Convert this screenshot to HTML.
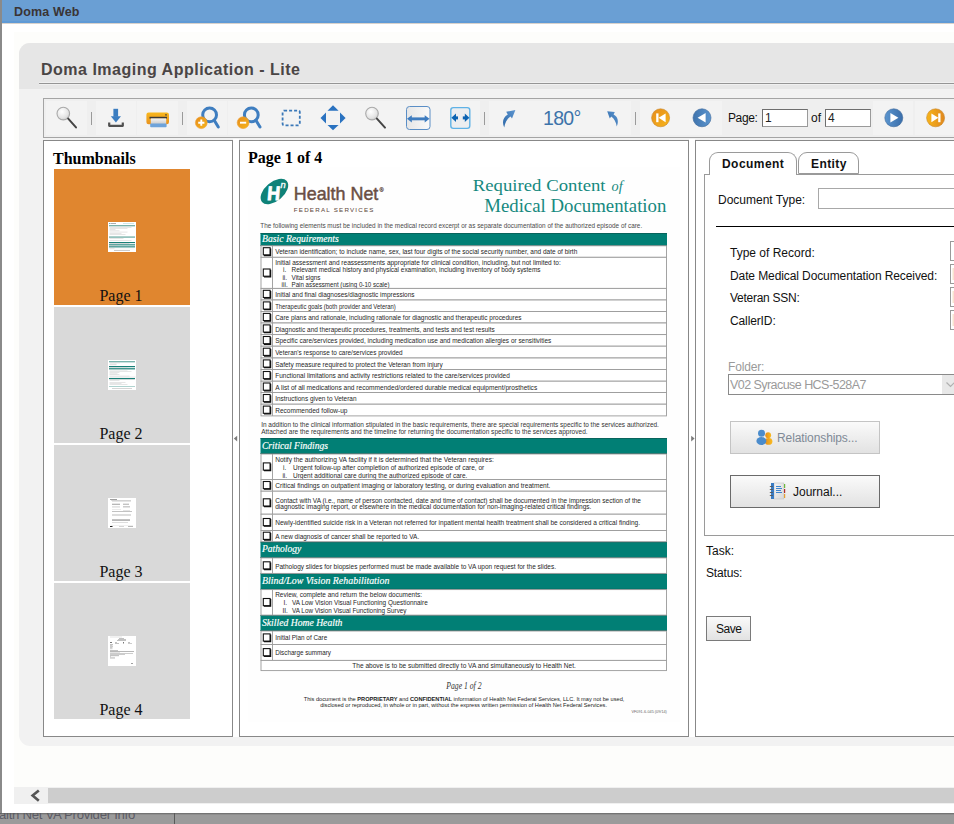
<!DOCTYPE html>
<html><head><meta charset="utf-8">
<style>
*{margin:0;padding:0;box-sizing:border-box}
html,body{width:954px;height:824px;overflow:hidden;background:#fff;font-family:"Liberation Sans",sans-serif;position:relative}
.a{position:absolute}
#under{left:0;top:813px;width:954px;height:11px;background:#9b9b9b;overflow:hidden}
#under .t{left:-1px;top:-6px;font-size:13.2px;color:#5c5c66;white-space:nowrap;letter-spacing:-0.3px}
#under .sh{left:0;top:0;width:954px;height:2px;background:linear-gradient(rgba(90,90,90,0.8),rgba(155,155,155,0))}
#under .v{left:174px;top:0;width:1px;height:11px;background:#5a5a5a}
#lb{left:0;top:0;width:2px;height:813px;background:#8a8a8a}
#title{left:2px;top:0;width:952px;height:24px;background:#6a9fd4;border-bottom:1px solid #d8d2cc;box-shadow:inset 0 -2px 0 #5f9ad6}
#title span{position:absolute;left:12px;top:5px;font-weight:bold;font-size:12.5px;color:#3a3434;letter-spacing:0.15px}
#offw{left:14px;top:32px;width:940px;height:755px;background:#fdfdfb}
#main{left:19px;top:43px;width:960px;height:703px;background:#f2f2f2;border-radius:11px;overflow:hidden}
#mainhead{left:0;top:0;width:960px;height:46px;background:#e6e6e6}
#apptitle{left:22px;top:18px;font-weight:bold;font-size:16px;color:#4a4545;letter-spacing:0.5px;white-space:nowrap}
#uline{left:20px;top:39px;width:940px;height:3px;background:#959595;border-top:1px solid #f0f0f0;border-bottom:1px solid #f0f0f0}
#toolbar{left:43px;top:98px;width:920px;height:40px;border:1px solid #a4a4a4;background:#efefef}
#thumbs{left:43px;top:140px;width:190px;height:597px;border:1px solid #888;background:#fff}
#pagev{left:239px;top:140px;width:450px;height:597px;border:1px solid #888;background:#fff;overflow:hidden}
#right{left:695px;top:140px;width:270px;height:597px;border:1px solid #888;background:#fff}
#split1{left:233px;top:139px;width:6px;height:598px;background:#fff}
#split2{left:689px;top:139px;width:6px;height:598px;background:#fff}
.inp{border:1px solid #6e6e6e;border-right-color:#9a9a9a;border-bottom-color:#9a9a9a;background:#fff;font-size:12px;color:#222;padding:1px 0 0 2px;line-height:15px}

.ser{font-family:"Liberation Serif",serif}
.thb{position:absolute;left:10px;width:136px;height:136px;background:#d9d9d9}
.thb.sel{background:#e0862f}
.thb .lbl{position:absolute;left:-1px;width:136px;top:118px;text-align:center;font-size:16px;color:#111;font-family:"Liberation Serif",serif}
.thb .mini{position:absolute;left:54px;top:53px;width:28px;height:30px;background:#fff}
.thb .mini svg{display:block}
.lab{position:absolute;font-size:12px;color:#111;white-space:nowrap}

.tab{border:1px solid #9a9a9a;border-bottom:none;border-radius:9px 9px 0 0;background:#fff}
.tab b{position:absolute;top:3px;font-size:12px;color:#111;letter-spacing:0.3px}
.rin{left:950px;width:20px;height:20px;border:1px solid #9a9a9a;background:#fff}
.btn2{border:1px solid #888;background:linear-gradient(#fafafa,#e2e2e2)}
#scroll{left:14px;top:787px;width:940px;height:17px;background:#f0f0f0}
#scroll .thm{left:34px;top:1px;width:920px;height:15px;background:#cdcdcd}
#scroll .btn{left:0;top:0;width:34px;height:17px;background:#f0f0f0}
</style></head><body>
<div id="under" class="a"><div class="a t">alth Net VA Provider Info</div><div class="a v"></div><div class="a sh"></div></div>
<div id="lb" class="a"></div>
<div id="title" class="a"><span>Doma Web</span></div>
<div id="offw" class="a"></div>
<div id="main" class="a">
  <div id="mainhead" class="a"></div>
  <div id="apptitle" class="a">Doma Imaging Application - Lite</div>
  <div id="uline" class="a"></div>
</div>
<div id="toolbar" class="a"></div>
<svg class="a" style="left:0;top:0" width="954" height="824" viewBox="0 0 954 824">
<defs>
<radialGradient id="glass" cx="0.4" cy="0.35" r="0.7"><stop offset="0" stop-color="#ffffff"/><stop offset="0.7" stop-color="#e4e4e4"/><stop offset="1" stop-color="#c8c8c8"/></radialGradient>
<linearGradient id="org" x1="0" y1="0" x2="1" y2="1"><stop offset="0" stop-color="#e58c1e"/><stop offset="1" stop-color="#f7b51a"/></linearGradient>
<linearGradient id="org2" x1="0" y1="0" x2="1" y2="0"><stop offset="0" stop-color="#f7b51a"/><stop offset="1" stop-color="#e0871e"/></linearGradient>
<linearGradient id="blu" x1="0" y1="0" x2="1" y2="0"><stop offset="0" stop-color="#3f73ac"/><stop offset="1" stop-color="#5b95cf"/></linearGradient>
<linearGradient id="blu2" x1="0" y1="0" x2="1" y2="0"><stop offset="0" stop-color="#5b95cf"/><stop offset="1" stop-color="#3a6eaa"/></linearGradient>
<linearGradient id="prn" x1="0" y1="0" x2="0" y2="1"><stop offset="0" stop-color="#f8b71c"/><stop offset="1" stop-color="#e89220"/></linearGradient>
<linearGradient id="paper" x1="0" y1="0" x2="0" y2="1"><stop offset="0" stop-color="#f4f4f4"/><stop offset="1" stop-color="#c9c9c9"/></linearGradient>
<linearGradient id="fitg" x1="0" y1="0" x2="1" y2="0"><stop offset="0" stop-color="#e6e6e6"/><stop offset="1" stop-color="#fafafa"/></linearGradient>
<linearGradient id="rot" x1="0" y1="1" x2="1" y2="0"><stop offset="0" stop-color="#2d68a8"/><stop offset="1" stop-color="#5d95cf"/></linearGradient>
</defs>
<!-- button faint rects -->
<g fill="#f3f3f3"><rect x="46" y="101" width="41" height="34"/><rect x="96" y="101" width="40" height="34"/><rect x="137" y="101" width="41" height="34"/><rect x="187" y="101" width="40" height="34"/><rect x="228" y="101" width="42" height="34"/><rect x="270" y="101" width="41" height="34"/><rect x="311" y="101" width="42" height="34"/><rect x="353" y="101" width="43" height="34"/><rect x="396" y="101" width="42" height="34"/><rect x="438" y="101" width="42" height="34"/><rect x="489" y="101" width="41" height="34"/><rect x="530" y="101" width="62" height="34"/><rect x="592" y="101" width="39" height="34"/><rect x="640" y="101" width="41" height="34"/><rect x="681" y="101" width="41" height="34"/><rect x="873" y="101" width="40" height="34"/><rect x="915" y="101" width="45" height="34"/></g>
<!-- separators -->
<g fill="#9a9a9a"><rect x="91" y="112" width="1" height="13"/><rect x="182" y="112" width="1" height="13"/><rect x="484" y="112" width="1" height="13"/><rect x="635" y="112" width="1" height="13"/></g>
<!-- magnifier 1 -->
<g><circle cx="63.3" cy="113.6" r="6.3" fill="url(#glass)" stroke="#a9a9a9" stroke-width="1.1"/><line x1="68.2" y1="118.6" x2="76" y2="127.4" stroke="#444" stroke-width="2" stroke-linecap="round"/></g>
<!-- download -->
<g><rect x="113.4" y="108.8" width="4.7" height="8" fill="#3b7dc0"/><polygon points="110.8,116.3 121,116.3 115.9,122.4" fill="#3b7dc0"/>
<path d="M109.2,122.5 V125.8 H122.8 V122.5" fill="none" stroke="#505050" stroke-width="2.2" stroke-linejoin="round"/></g>
<!-- printer -->
<g><rect x="146.4" y="112.5" width="22.6" height="11.8" rx="2.2" fill="url(#prn)"/><rect x="149.5" y="116.8" width="17.5" height="1.8" fill="#3a3a3a"/><circle cx="166" cy="114.8" r="0.9" fill="#5a4a30"/>
<rect x="150.8" y="118.4" width="15.4" height="5.8" fill="url(#paper)"/><rect x="150.2" y="123.6" width="16.4" height="3.6" rx="0.8" fill="#6ea3da"/></g>
<!-- zoom in -->
<g><circle cx="209.6" cy="114.9" r="6.9" fill="none" stroke="#3f7ec0" stroke-width="3"/><line x1="214.2" y1="120.2" x2="218.3" y2="127" stroke="#3f7ec0" stroke-width="3" stroke-linecap="round"/>
<circle cx="201.3" cy="122.7" r="5.9" fill="url(#org)" stroke="#f0a030" stroke-width="0.6"/><path d="M198.2,122.7 H204.4 M201.3,119.6 V125.8" stroke="#fff" stroke-width="1.9"/></g>
<!-- zoom out -->
<g><circle cx="251.3" cy="114.9" r="6.9" fill="none" stroke="#3f7ec0" stroke-width="3"/><line x1="255.9" y1="120.2" x2="260" y2="127" stroke="#3f7ec0" stroke-width="3" stroke-linecap="round"/>
<circle cx="243.1" cy="122.7" r="5.9" fill="url(#org)" stroke="#f0a030" stroke-width="0.6"/><path d="M240,122.7 H246.2" stroke="#fff" stroke-width="1.9"/></g>
<!-- select rect -->
<rect x="282.6" y="110.6" width="17.2" height="14.8" rx="1.5" fill="none" stroke="#3a78b8" stroke-width="1.8" stroke-dasharray="3 2"/>
<!-- pan -->
<g fill="#2a72c0"><polygon points="327.5,110.8 338.6,110.8 333,105.3"/><polygon points="327.5,124.9 338.6,124.9 333,130.2"/><polygon points="326,112.6 326,123.5 320.5,118"/><polygon points="340,112.6 340,123.5 345.6,118"/></g>
<!-- magnifier 2 -->
<g><circle cx="372" cy="113.6" r="6.3" fill="url(#glass)" stroke="#a9a9a9" stroke-width="1.1"/><line x1="376.9" y1="118.6" x2="385" y2="127.6" stroke="#444" stroke-width="2" stroke-linecap="round"/></g>
<!-- fit width -->
<g><rect x="406.5" y="106.5" width="23.5" height="23" rx="3" fill="url(#fitg)" stroke="#5a8ec6" stroke-width="1"/>
<rect x="410" y="117.4" width="16.5" height="2.9" fill="#3e7cbf"/><polygon points="407,118.85 411.8,115.2 411.8,122.5" fill="#3e7cbf"/><polygon points="429.5,118.85 424.7,115.2 424.7,122.5" fill="#3e7cbf"/></g>
<!-- fit page -->
<g><rect x="450.8" y="107.6" width="19" height="20.8" rx="2.6" fill="#eceef0" stroke="#5fb2e6" stroke-width="1.4"/>
<polygon points="451.4,117.8 456,113.6 456,122" fill="#0b63b2"/><rect x="455" y="116.4" width="3" height="3" fill="#0b63b2"/>
<polygon points="469.4,117.8 464.8,113.6 464.8,122" fill="#0b63b2"/><rect x="462.8" y="116.4" width="3" height="3" fill="#0b63b2"/></g>
<!-- rotate right -->
<path d="M504.2,127.6 C501.8,122 503,117.2 507.8,114.4 L506.2,111.8 L515.4,110 L512,118.6 L510.6,116.4 C507.2,118.8 505,122.6 504.2,127.6 Z" fill="url(#rot)"/>
<!-- rotate left -->
<path d="M616.8,126.6 C619,121.2 617.8,116.8 613.6,114.6 L614.8,112 L607.2,111.2 L609.8,118.4 L611.2,116.4 C614.2,118.6 616.2,122 616.8,126.6 Z" fill="url(#rot)"/>
<!-- nav -->
<g><circle cx="660.6" cy="117.8" r="9" fill="url(#org)" stroke="#c8862a" stroke-width="0.6"/><rect x="656.2" y="113.4" width="2.3" height="8.8" fill="#fff"/><polygon points="665.6,113.4 665.6,122.2 658.6,117.8" fill="#fff"/></g>
<g><circle cx="702" cy="117.8" r="9" fill="url(#blu)" stroke="#3a6699" stroke-width="0.6"/><polygon points="705.6,113 705.6,122.6 697.6,117.8" fill="#fff"/></g>
<g><circle cx="893.8" cy="117.8" r="9" fill="url(#blu2)" stroke="#3a6699" stroke-width="0.6"/><polygon points="890.4,113 890.4,122.6 898.4,117.8" fill="#fff"/></g>
<g><circle cx="935.6" cy="117.8" r="9" fill="url(#org2)" stroke="#c8862a" stroke-width="0.6"/><polygon points="931.4,113.4 931.4,122.2 938.4,117.8" fill="#fff"/><rect x="938.2" y="113.4" width="2.3" height="8.8" fill="#fff"/></g>
</svg>
<div class="a" style="left:543px;top:107px;font-size:19.5px;color:#3d73aa;letter-spacing:-0.7px">180°</div>
<div class="a" style="left:728px;top:111px;font-size:12px;color:#111;letter-spacing:-0.4px">Page:</div>
<div class="a inp" style="left:762px;top:109px;width:46px;height:18px">1</div>
<div class="a" style="left:811px;top:111px;font-size:12px;color:#111">of</div>
<div class="a inp" style="left:825px;top:109px;width:46px;height:18px">4</div>

<div id="split1" class="a"></div>
<div id="split2" class="a"></div>
<svg class="a" style="left:0;top:0" width="954" height="824" viewBox="0 0 954 824"><polygon points="237.2,435.8 237.2,441.4 233.8,438.6" fill="#7a7a7a"/><polygon points="691.2,435.8 691.2,441.4 694.6,438.6" fill="#7a7a7a"/></svg>
<div id="thumbs" class="a">
<div class="a ser" style="left:9px;top:9px;font-weight:bold;font-size:16px;color:#000">Thumbnails</div>
<div class="thb sel" style="top:28px"><div class="mini m1"><svg width="28" height="30" viewBox="0 0 28 30"><rect width="28" height="30" fill="#fff"/>
<rect x="1" y="1" width="1.5" height="1" fill="#7ab"/><rect x="3" y="1.2" width="5" height="0.8" fill="#999"/><rect x="15" y="1" width="11" height="0.7" fill="#bdd"/>
<rect x="1" y="3.2" width="26" height="1.1" fill="#5a9e96"/>
<g fill="#ccc"><rect x="1.5" y="5" width="22" height="0.5"/><rect x="1.5" y="6.2" width="18" height="0.5"/><rect x="1.5" y="7.4" width="6" height="0.5"/><rect x="1.5" y="8.6" width="10" height="0.5"/><rect x="1.5" y="9.8" width="18" height="0.5"/><rect x="1.5" y="11" width="12" height="0.5"/><rect x="1.5" y="12.2" width="16" height="0.5"/></g>
<rect x="1" y="14.3" width="26" height="1.6" fill="#8bbcb6"/>
<g fill="#ccc"><rect x="1.5" y="16.5" width="14" height="0.5"/><rect x="1.5" y="18.3" width="22" height="0.5"/></g>
<rect x="1" y="20" width="26" height="1.1" fill="#1a8078"/><rect x="1.5" y="21.5" width="20" height="0.5" fill="#bbb"/>
<rect x="1" y="22.3" width="26" height="1.1" fill="#1a8078"/><rect x="1.5" y="23.6" width="8" height="0.5" fill="#bbb"/>
<rect x="1" y="24.3" width="26" height="1.1" fill="#1a8078"/><rect x="1.5" y="25.8" width="5" height="0.5" fill="#bbb"/><rect x="1.5" y="26.8" width="25" height="0.4" fill="#ddd"/>
<rect x="6" y="28" width="16" height="0.6" fill="#aaa"/></svg></div><div class="lbl">Page 1</div></div>
<div class="thb" style="top:166px"><div class="mini m2"><svg width="28" height="30" viewBox="0 0 28 30"><rect width="28" height="30" fill="#fff"/>
<rect x="1" y="1.2" width="26" height="1.1" fill="#5aa39b"/>
<g fill="#ccc"><rect x="2" y="2.7" width="10" height="0.5"/><rect x="1.5" y="3.8" width="7" height="0.5"/><rect x="1.5" y="4.6" width="7" height="0.5"/></g>
<rect x="1" y="6" width="26" height="1.2" fill="#1a8078"/><rect x="1.5" y="7.5" width="18" height="0.4" fill="#ccc"/>
<rect x="1" y="8.2" width="26" height="1.2" fill="#1a8078"/>
<g fill="#ccc"><rect x="1.5" y="9.8" width="18" height="0.5"/><rect x="1.5" y="11.5" width="22" height="0.5"/><rect x="1.5" y="12.4" width="10" height="0.5"/><rect x="1.5" y="13.6" width="8" height="0.5"/><rect x="1.5" y="14.5" width="10" height="0.5"/><rect x="1.5" y="15.8" width="20" height="0.5"/><rect x="1.5" y="16.8" width="26" height="0.5"/></g>
<rect x="1" y="18" width="26" height="1.2" fill="#1a8078"/>
<g fill="#ccc"><rect x="1.5" y="19.5" width="25" height="0.5"/><rect x="1.5" y="20.5" width="10" height="0.5"/><rect x="1.5" y="22" width="16" height="0.5"/><rect x="1.5" y="23" width="12" height="0.5"/><rect x="1.5" y="24.5" width="18" height="0.5"/></g>
<rect x="1" y="26" width="26" height="0.8" fill="#9cc9c3"/>
<rect x="4" y="28.2" width="20" height="0.5" fill="#aaa"/></svg></div><div class="lbl">Page 2</div></div>
<div class="thb" style="top:304px"><div class="mini m3"><svg width="28" height="30" viewBox="0 0 28 30"><rect width="28" height="30" fill="#fff"/>
<g fill="#888"><rect x="2" y="1" width="7" height="0.8"/><rect x="3" y="2" width="20" height="0.5" fill="#bbb"/><rect x="4" y="2.8" width="19" height="0.5" fill="#aaa"/>
<rect x="4" y="5.8" width="8" height="0.8"/><rect x="15" y="5.8" width="6" height="0.7"/>
<rect x="4" y="8" width="8" height="0.4" fill="#bbb"/><rect x="15" y="8" width="7" height="0.5" fill="#999"/><rect x="4" y="9.5" width="8" height="0.4" fill="#ccc"/><rect x="15" y="9.5" width="7" height="0.4" fill="#bbb"/><rect x="4" y="11" width="9" height="0.4" fill="#ccc"/><rect x="15" y="12" width="7" height="0.4" fill="#bbb"/>
<rect x="4" y="13" width="20" height="0.6" fill="#999"/>
<rect x="4" y="16" width="19" height="0.5" fill="#bbb"/><rect x="4" y="17.2" width="19" height="0.5" fill="#bbb"/>
<rect x="4" y="21" width="18" height="0.6" fill="#999"/><rect x="4" y="22" width="18" height="0.6" fill="#888"/><rect x="4" y="24.2" width="16" height="0.5" fill="#bbb"/>
<rect x="3" y="27" width="22" height="0.3" fill="#ccc"/><rect x="2" y="28" width="2.5" height="1" fill="#222"/><rect x="11" y="28" width="5" height="0.5" fill="#aaa"/><rect x="20" y="28" width="5" height="0.6" fill="#888"/></g></svg></div><div class="lbl">Page 3</div></div>
<div class="thb" style="top:442px"><div class="mini m4"><svg width="28" height="30" viewBox="0 0 28 30"><rect width="28" height="30" fill="#fff"/>
<g fill="#999"><rect x="2" y="0.8" width="12" height="0.4" fill="#bbb"/><rect x="11" y="2.3" width="5" height="0.6"/><rect x="10" y="3.3" width="8" height="0.6"/><rect x="9" y="4.3" width="9" height="0.6"/>
<rect x="2" y="6" width="2" height="1" fill="#777"/><rect x="7" y="6" width="2" height="0.6"/><rect x="7" y="7" width="4" height="0.6"/><rect x="15" y="6" width="1" height="1.5" fill="#777"/><rect x="20" y="6" width="2" height="0.6"/><rect x="20" y="7" width="4" height="0.5"/>
<rect x="2" y="8" width="3" height="0.6"/><rect x="2" y="9.2" width="2.5" height="0.5"/><rect x="2" y="10.3" width="3" height="0.5"/><rect x="2" y="11.5" width="2.5" height="0.5"/><rect x="2" y="12.6" width="2.5" height="0.5"/>
<rect x="2" y="14" width="8" height="0.6"/><rect x="2" y="15" width="24" height="0.6" fill="#888"/><rect x="2" y="16.2" width="10" height="0.4" fill="#bbb"/>
<rect x="2" y="17.5" width="23" height="0.5"/><rect x="2" y="18.5" width="15" height="0.5"/><rect x="2" y="19.5" width="9" height="0.6" fill="#888"/>
<rect x="2" y="20.6" width="1" height="0.5"/><rect x="2" y="21.5" width="5" height="0.5" fill="#aaa"/><rect x="2" y="22.3" width="5" height="0.4" fill="#aaa"/>
<rect x="23" y="27" width="2" height="0.7" fill="#777"/></g></svg></div><div class="lbl">Page 4</div></div>
</div>
<div id="pagev" class="a">
<div class="a ser" style="left:8px;top:8px;font-weight:bold;font-size:16px;color:#000">Page 1 of 4</div>
<div id="doc" class="a" style="left:8px;top:26px;width:432px;height:555px;background:#fefefe"></div>
</div>
<svg class="a" style="left:0;top:0" width="954" height="824" viewBox="0 0 954 824"><rect x="260.5" y="233" width="406.5" height="12.800000000000011" fill="#017f75"/>
<rect x="260.5" y="233" width="406.5" height="0.8" fill="#0b5e57"/>
<rect x="260.5" y="245.0" width="406.5" height="0.8" fill="#0b5e57"/>
<text x="262" y="242.4" font-size="10.2" fill="#fff" font-family="Liberation Serif" font-style="italic" textLength="76.8" lengthAdjust="spacingAndGlyphs" stroke="#fff" stroke-width="0.18">Basic Requirements</text>
<rect x="260.5" y="438" width="406.5" height="16" fill="#017f75"/>
<rect x="260.5" y="438" width="406.5" height="0.8" fill="#0b5e57"/>
<rect x="260.5" y="453.2" width="406.5" height="0.8" fill="#0b5e57"/>
<text x="262" y="448.6" font-size="9.8" fill="#fff" font-family="Liberation Serif" font-style="italic" textLength="66.0" lengthAdjust="spacingAndGlyphs" stroke="#fff" stroke-width="0.18">Critical Findings</text>
<rect x="260.5" y="541.7" width="406.5" height="16.199999999999932" fill="#017f75"/>
<rect x="260.5" y="541.7" width="406.5" height="0.8" fill="#0b5e57"/>
<rect x="260.5" y="557.1" width="406.5" height="0.8" fill="#0b5e57"/>
<text x="262" y="552.3000000000001" font-size="9.8" fill="#fff" font-family="Liberation Serif" font-style="italic" textLength="39.3" lengthAdjust="spacingAndGlyphs" stroke="#fff" stroke-width="0.18">Pathology</text>
<rect x="260.5" y="573.4" width="406.5" height="16.200000000000045" fill="#017f75"/>
<rect x="260.5" y="573.4" width="406.5" height="0.8" fill="#0b5e57"/>
<rect x="260.5" y="588.8000000000001" width="406.5" height="0.8" fill="#0b5e57"/>
<text x="262" y="584.0" font-size="9.8" fill="#fff" font-family="Liberation Serif" font-style="italic" textLength="127.5" lengthAdjust="spacingAndGlyphs" stroke="#fff" stroke-width="0.18">Blind/Low Vision Rehabilitation</text>
<rect x="260.5" y="615.1" width="406.5" height="15.899999999999977" fill="#017f75"/>
<rect x="260.5" y="615.1" width="406.5" height="0.8" fill="#0b5e57"/>
<rect x="260.5" y="630.2" width="406.5" height="0.8" fill="#0b5e57"/>
<text x="262" y="625.7" font-size="9.8" fill="#fff" font-family="Liberation Serif" font-style="italic" textLength="80.4" lengthAdjust="spacingAndGlyphs" stroke="#fff" stroke-width="0.18">Skilled Home Health</text>
<rect x="261.0" y="245.8" width="405.5" height="11.5" fill="#fff" stroke="#9a9a9a" stroke-width="0.9"/>
<line x1="272.5" y1="245.8" x2="272.5" y2="257.3" stroke="#9a9a9a" stroke-width="0.9"/>
<rect x="263.3" y="247.7" width="6.8" height="7.2" fill="#fff" stroke="#111" stroke-width="1.1"/>
<path d="M270.6,248.4 V255.5 H264" fill="none" stroke="#111" stroke-width="1.3"/>
<text x="275.2" y="254.1" font-size="6.5" fill="#262626" font-family="Liberation Sans" textLength="302.1" lengthAdjust="spacingAndGlyphs">Veteran identification; to include name, sex, last four digits of the social security number, and date of birth</text>
<rect x="261.0" y="257.3" width="405.5" height="31.099999999999966" fill="#fff" stroke="#9a9a9a" stroke-width="0.9"/>
<line x1="272.5" y1="257.3" x2="272.5" y2="288.4" stroke="#9a9a9a" stroke-width="0.9"/>
<rect x="263.3" y="269.0" width="6.8" height="7.2" fill="#fff" stroke="#111" stroke-width="1.1"/>
<path d="M270.6,269.7 V276.8 H264" fill="none" stroke="#111" stroke-width="1.3"/>
<text x="275.2" y="264.7" font-size="6.5" fill="#262626" font-family="Liberation Sans" textLength="285.6" lengthAdjust="spacingAndGlyphs">Initial assessment and reassessments appropriate for clinical condition, including, but not limited to:</text>
<text x="283" y="272.3" font-size="6.5" fill="#262626" font-family="Liberation Sans">i.</text>
<text x="291.5" y="272.3" font-size="6.5" fill="#262626" font-family="Liberation Sans" textLength="249.0" lengthAdjust="spacingAndGlyphs">Relevant medical history and physical examination, including inventory of body systems</text>
<text x="282.4" y="279.7" font-size="6.5" fill="#262626" font-family="Liberation Sans">ii.</text>
<text x="291.5" y="279.7" font-size="6.5" fill="#262626" font-family="Liberation Sans" textLength="29.0" lengthAdjust="spacingAndGlyphs">Vital signs</text>
<text x="281.6" y="286.6" font-size="6.5" fill="#262626" font-family="Liberation Sans">iii.</text>
<text x="291.5" y="286.6" font-size="6.5" fill="#262626" font-family="Liberation Sans" textLength="98.0" lengthAdjust="spacingAndGlyphs">Pain assessment (using 0-10 scale)</text>
<rect x="261.0" y="288.4" width="405.5" height="11.600000000000023" fill="#fff" stroke="#9a9a9a" stroke-width="0.9"/>
<line x1="272.5" y1="288.4" x2="272.5" y2="300" stroke="#9a9a9a" stroke-width="0.9"/>
<rect x="263.3" y="290.3" width="6.8" height="7.2" fill="#fff" stroke="#111" stroke-width="1.1"/>
<path d="M270.6,291.0 V298.1 H264" fill="none" stroke="#111" stroke-width="1.3"/>
<text x="275.2" y="297.1" font-size="6.5" fill="#262626" font-family="Liberation Sans" textLength="139.3" lengthAdjust="spacingAndGlyphs">Initial and final diagnoses/diagnostic impressions</text>
<rect x="261.0" y="300" width="405.5" height="11.5" fill="#fff" stroke="#9a9a9a" stroke-width="0.9"/>
<line x1="272.5" y1="300" x2="272.5" y2="311.5" stroke="#9a9a9a" stroke-width="0.9"/>
<rect x="263.3" y="301.9" width="6.8" height="7.2" fill="#fff" stroke="#111" stroke-width="1.1"/>
<path d="M270.6,302.6 V309.6 H264" fill="none" stroke="#111" stroke-width="1.3"/>
<text x="275.2" y="308.6" font-size="6.5" fill="#262626" font-family="Liberation Sans" textLength="120.5" lengthAdjust="spacingAndGlyphs">Therapeutic goals (both provider and Veteran)</text>
<rect x="261.0" y="311.5" width="405.5" height="11.5" fill="#fff" stroke="#9a9a9a" stroke-width="0.9"/>
<line x1="272.5" y1="311.5" x2="272.5" y2="323" stroke="#9a9a9a" stroke-width="0.9"/>
<rect x="263.3" y="313.4" width="6.8" height="7.2" fill="#fff" stroke="#111" stroke-width="1.1"/>
<path d="M270.6,314.1 V321.1 H264" fill="none" stroke="#111" stroke-width="1.3"/>
<text x="275.2" y="320.1" font-size="6.5" fill="#262626" font-family="Liberation Sans" textLength="246.4" lengthAdjust="spacingAndGlyphs">Care plans and rationale, including rationale for diagnostic and therapeutic procedures</text>
<rect x="261.0" y="323" width="405.5" height="11.600000000000023" fill="#fff" stroke="#9a9a9a" stroke-width="0.9"/>
<line x1="272.5" y1="323" x2="272.5" y2="334.6" stroke="#9a9a9a" stroke-width="0.9"/>
<rect x="263.3" y="324.9" width="6.8" height="7.2" fill="#fff" stroke="#111" stroke-width="1.1"/>
<path d="M270.6,325.6 V332.7 H264" fill="none" stroke="#111" stroke-width="1.3"/>
<text x="275.2" y="331.7" font-size="6.5" fill="#262626" font-family="Liberation Sans" textLength="219.5" lengthAdjust="spacingAndGlyphs">Diagnostic and therapeutic procedures, treatments, and tests and test results</text>
<rect x="261.0" y="334.6" width="405.5" height="11.599999999999966" fill="#fff" stroke="#9a9a9a" stroke-width="0.9"/>
<line x1="272.5" y1="334.6" x2="272.5" y2="346.2" stroke="#9a9a9a" stroke-width="0.9"/>
<rect x="263.3" y="336.5" width="6.8" height="7.2" fill="#fff" stroke="#111" stroke-width="1.1"/>
<path d="M270.6,337.2 V344.3 H264" fill="none" stroke="#111" stroke-width="1.3"/>
<text x="275.2" y="343.3" font-size="6.5" fill="#262626" font-family="Liberation Sans" textLength="276.1" lengthAdjust="spacingAndGlyphs">Specific care/services provided, including medication use and medication allergies or sensitivities</text>
<rect x="261.0" y="346.2" width="405.5" height="11.800000000000011" fill="#fff" stroke="#9a9a9a" stroke-width="0.9"/>
<line x1="272.5" y1="346.2" x2="272.5" y2="358" stroke="#9a9a9a" stroke-width="0.9"/>
<rect x="263.3" y="348.2" width="6.8" height="7.2" fill="#fff" stroke="#111" stroke-width="1.1"/>
<path d="M270.6,348.9 V356.0 H264" fill="none" stroke="#111" stroke-width="1.3"/>
<text x="275.2" y="355.1" font-size="6.5" fill="#262626" font-family="Liberation Sans" textLength="127.5" lengthAdjust="spacingAndGlyphs">Veteran's response to care/services provided</text>
<rect x="261.0" y="358" width="405.5" height="11.5" fill="#fff" stroke="#9a9a9a" stroke-width="0.9"/>
<line x1="272.5" y1="358" x2="272.5" y2="369.5" stroke="#9a9a9a" stroke-width="0.9"/>
<rect x="263.3" y="359.9" width="6.8" height="7.2" fill="#fff" stroke="#111" stroke-width="1.1"/>
<path d="M270.6,360.6 V367.6 H264" fill="none" stroke="#111" stroke-width="1.3"/>
<text x="275.2" y="366.6" font-size="6.5" fill="#262626" font-family="Liberation Sans" textLength="167.6" lengthAdjust="spacingAndGlyphs">Safety measure required to protect the Veteran from injury</text>
<rect x="261.0" y="369.5" width="405.5" height="11.699999999999989" fill="#fff" stroke="#9a9a9a" stroke-width="0.9"/>
<line x1="272.5" y1="369.5" x2="272.5" y2="381.2" stroke="#9a9a9a" stroke-width="0.9"/>
<rect x="263.3" y="371.5" width="6.8" height="7.2" fill="#fff" stroke="#111" stroke-width="1.1"/>
<path d="M270.6,372.2 V379.2 H264" fill="none" stroke="#111" stroke-width="1.3"/>
<text x="275.2" y="378.3" font-size="6.5" fill="#262626" font-family="Liberation Sans" textLength="234.6" lengthAdjust="spacingAndGlyphs">Functional limitations and activity restrictions related to the care/services provided</text>
<rect x="261.0" y="381.2" width="405.5" height="11.300000000000011" fill="#fff" stroke="#9a9a9a" stroke-width="0.9"/>
<line x1="272.5" y1="381.2" x2="272.5" y2="392.5" stroke="#9a9a9a" stroke-width="0.9"/>
<rect x="263.3" y="383.0" width="6.8" height="7.2" fill="#fff" stroke="#111" stroke-width="1.1"/>
<path d="M270.6,383.7 V390.8 H264" fill="none" stroke="#111" stroke-width="1.3"/>
<text x="275.2" y="389.9" font-size="6.5" fill="#262626" font-family="Liberation Sans" textLength="262.0" lengthAdjust="spacingAndGlyphs">A list of all medications and recommended/ordered durable medical equipment/prosthetics</text>
<rect x="261.0" y="392.5" width="405.5" height="11.699999999999989" fill="#fff" stroke="#9a9a9a" stroke-width="0.9"/>
<line x1="272.5" y1="392.5" x2="272.5" y2="404.2" stroke="#9a9a9a" stroke-width="0.9"/>
<rect x="263.3" y="394.5" width="6.8" height="7.2" fill="#fff" stroke="#111" stroke-width="1.1"/>
<path d="M270.6,395.2 V402.2 H264" fill="none" stroke="#111" stroke-width="1.3"/>
<text x="275.2" y="401.3" font-size="6.5" fill="#262626" font-family="Liberation Sans" textLength="81.3" lengthAdjust="spacingAndGlyphs">Instructions given to Veteran</text>
<rect x="261.0" y="404.2" width="405.5" height="11.699999999999989" fill="#fff" stroke="#9a9a9a" stroke-width="0.9"/>
<line x1="272.5" y1="404.2" x2="272.5" y2="415.9" stroke="#9a9a9a" stroke-width="0.9"/>
<rect x="263.3" y="406.1" width="6.8" height="7.2" fill="#fff" stroke="#111" stroke-width="1.1"/>
<path d="M270.6,406.8 V413.9 H264" fill="none" stroke="#111" stroke-width="1.3"/>
<text x="275.2" y="413.0" font-size="6.5" fill="#262626" font-family="Liberation Sans" textLength="72.3" lengthAdjust="spacingAndGlyphs">Recommended follow-up</text>
<rect x="261.0" y="454" width="405.5" height="25.5" fill="#fff" stroke="#9a9a9a" stroke-width="0.9"/>
<line x1="272.5" y1="454" x2="272.5" y2="479.5" stroke="#9a9a9a" stroke-width="0.9"/>
<rect x="263.3" y="462.9" width="6.8" height="7.2" fill="#fff" stroke="#111" stroke-width="1.1"/>
<path d="M270.6,463.6 V470.6 H264" fill="none" stroke="#111" stroke-width="1.3"/>
<text x="275.2" y="461.5" font-size="6.5" fill="#262626" font-family="Liberation Sans" textLength="218.6" lengthAdjust="spacingAndGlyphs">Notify the authorizing VA facility if it is determined that the Veteran requires:</text>
<text x="283" y="470.1" font-size="6.5" fill="#262626" font-family="Liberation Sans">i.</text>
<text x="293" y="470.1" font-size="6.5" fill="#262626" font-family="Liberation Sans" textLength="191.3" lengthAdjust="spacingAndGlyphs">Urgent follow-up after completion of authorized episode of care, or</text>
<text x="282.4" y="478.3" font-size="6.5" fill="#262626" font-family="Liberation Sans">ii.</text>
<text x="293" y="478.3" font-size="6.5" fill="#262626" font-family="Liberation Sans" textLength="174.4" lengthAdjust="spacingAndGlyphs">Urgent additional care during the authorized episode of care.</text>
<rect x="261.0" y="479.5" width="405.5" height="11.699999999999989" fill="#fff" stroke="#9a9a9a" stroke-width="0.9"/>
<line x1="272.5" y1="479.5" x2="272.5" y2="491.2" stroke="#9a9a9a" stroke-width="0.9"/>
<rect x="263.3" y="481.5" width="6.8" height="7.2" fill="#fff" stroke="#111" stroke-width="1.1"/>
<path d="M270.6,482.2 V489.2 H264" fill="none" stroke="#111" stroke-width="1.3"/>
<text x="275.2" y="488.3" font-size="6.5" fill="#262626" font-family="Liberation Sans" textLength="275.2" lengthAdjust="spacingAndGlyphs">Critical findings on outpatient imaging or laboratory testing, or during evaluation and treatment.</text>
<rect x="261.0" y="491.2" width="405.5" height="23.000000000000057" fill="#fff" stroke="#9a9a9a" stroke-width="0.9"/>
<line x1="272.5" y1="491.2" x2="272.5" y2="514.2" stroke="#9a9a9a" stroke-width="0.9"/>
<rect x="263.3" y="498.8" width="6.8" height="7.2" fill="#fff" stroke="#111" stroke-width="1.1"/>
<path d="M270.6,499.5 V506.6 H264" fill="none" stroke="#111" stroke-width="1.3"/>
<text x="275.2" y="502.9" font-size="6.5" fill="#262626" font-family="Liberation Sans" textLength="365.8" lengthAdjust="spacingAndGlyphs">Contact with VA (i.e., name of person contacted, date and time of contact) shall be documented in the impression section of the</text>
<text x="275.2" y="509.4" font-size="6.5" fill="#262626" font-family="Liberation Sans" textLength="316.2" lengthAdjust="spacingAndGlyphs">diagnostic imaging report, or elsewhere in the medical documentation for non-imaging-related critical findings.</text>
<rect x="261.0" y="514.2" width="405.5" height="16.299999999999955" fill="#fff" stroke="#9a9a9a" stroke-width="0.9"/>
<line x1="272.5" y1="514.2" x2="272.5" y2="530.5" stroke="#9a9a9a" stroke-width="0.9"/>
<rect x="263.3" y="518.5" width="6.8" height="7.2" fill="#fff" stroke="#111" stroke-width="1.1"/>
<path d="M270.6,519.1 V526.2 H264" fill="none" stroke="#111" stroke-width="1.3"/>
<text x="275.2" y="525.3" font-size="6.5" fill="#262626" font-family="Liberation Sans" textLength="364.8" lengthAdjust="spacingAndGlyphs">Newly-identified suicide risk in a Veteran not referred for inpatient mental health treatment shall be considered a critical finding.</text>
<rect x="261.0" y="530.5" width="405.5" height="11.200000000000045" fill="#fff" stroke="#9a9a9a" stroke-width="0.9"/>
<line x1="272.5" y1="530.5" x2="272.5" y2="541.7" stroke="#9a9a9a" stroke-width="0.9"/>
<rect x="263.3" y="532.2" width="6.8" height="7.2" fill="#fff" stroke="#111" stroke-width="1.1"/>
<path d="M270.6,532.9 V540.0 H264" fill="none" stroke="#111" stroke-width="1.3"/>
<text x="275.2" y="539.1" font-size="6.5" fill="#262626" font-family="Liberation Sans" textLength="144.0" lengthAdjust="spacingAndGlyphs">A new diagnosis of cancer shall be reported to VA.</text>
<rect x="261.0" y="557.9" width="405.5" height="15.5" fill="#fff" stroke="#9a9a9a" stroke-width="0.9"/>
<line x1="272.5" y1="557.9" x2="272.5" y2="573.4" stroke="#9a9a9a" stroke-width="0.9"/>
<rect x="263.3" y="561.8" width="6.8" height="7.2" fill="#fff" stroke="#111" stroke-width="1.1"/>
<path d="M270.6,562.4 V569.5 H264" fill="none" stroke="#111" stroke-width="1.3"/>
<text x="275.2" y="568.7" font-size="6.5" fill="#262626" font-family="Liberation Sans" textLength="280.8" lengthAdjust="spacingAndGlyphs">Pathology slides for biopsies performed must be made available to VA upon request for the slides.</text>
<rect x="261.0" y="589.6" width="405.5" height="25.5" fill="#fff" stroke="#9a9a9a" stroke-width="0.9"/>
<line x1="272.5" y1="589.6" x2="272.5" y2="615.1" stroke="#9a9a9a" stroke-width="0.9"/>
<rect x="263.3" y="598.5" width="6.8" height="7.2" fill="#fff" stroke="#111" stroke-width="1.1"/>
<path d="M270.6,599.1 V606.2 H264" fill="none" stroke="#111" stroke-width="1.3"/>
<text x="275.2" y="596.8" font-size="6.5" fill="#262626" font-family="Liberation Sans" textLength="146.8" lengthAdjust="spacingAndGlyphs">Review, complete and return the below documents:</text>
<text x="283.4" y="605.0" font-size="6.5" fill="#262626" font-family="Liberation Sans">I.</text>
<text x="292" y="605.0" font-size="6.5" fill="#262626" font-family="Liberation Sans" textLength="135.7" lengthAdjust="spacingAndGlyphs">VA Low Vision Visual Functioning Questionnaire</text>
<text x="282.4" y="613.0" font-size="6.5" fill="#262626" font-family="Liberation Sans">II.</text>
<text x="292" y="613.0" font-size="6.5" fill="#262626" font-family="Liberation Sans" textLength="114.5" lengthAdjust="spacingAndGlyphs">VA Low Vision Visual Functioning Survey</text>
<rect x="261.0" y="631" width="405.5" height="13.5" fill="#fff" stroke="#9a9a9a" stroke-width="0.9"/>
<line x1="272.5" y1="631" x2="272.5" y2="644.5" stroke="#9a9a9a" stroke-width="0.9"/>
<rect x="263.3" y="633.9" width="6.8" height="7.2" fill="#fff" stroke="#111" stroke-width="1.1"/>
<path d="M270.6,634.5 V641.6 H264" fill="none" stroke="#111" stroke-width="1.3"/>
<text x="275.2" y="640.3" font-size="6.5" fill="#262626" font-family="Liberation Sans" textLength="52.1" lengthAdjust="spacingAndGlyphs">Initial Plan of Care</text>
<rect x="261.0" y="644.5" width="405.5" height="15.899999999999977" fill="#fff" stroke="#9a9a9a" stroke-width="0.9"/>
<line x1="272.5" y1="644.5" x2="272.5" y2="660.4" stroke="#9a9a9a" stroke-width="0.9"/>
<rect x="263.3" y="648.6" width="6.8" height="7.2" fill="#fff" stroke="#111" stroke-width="1.1"/>
<path d="M270.6,649.2 V656.4 H264" fill="none" stroke="#111" stroke-width="1.3"/>
<text x="275.2" y="655.1" font-size="6.5" fill="#262626" font-family="Liberation Sans" textLength="55.8" lengthAdjust="spacingAndGlyphs">Discharge summary</text>
<rect x="261.0" y="660.4" width="405.5" height="10.2" fill="#fff" stroke="#9a9a9a" stroke-width="0.9"/>
<text x="352.3" y="667.8" font-size="6.5" fill="#262626" font-family="Liberation Sans" textLength="223.5" lengthAdjust="spacingAndGlyphs">The above is to be submitted directly to VA and simultaneously to Health Net.</text>
<text x="260.3" y="228.1" font-size="6.3" fill="#4a4a4a" font-family="Liberation Sans" textLength="381.9" lengthAdjust="spacingAndGlyphs">The following elements must be included in the medical record excerpt or as separate documentation of the authorized episode of care.</text>
<text x="261.2" y="427" font-size="6.5" fill="#333" font-family="Liberation Sans" textLength="397.7" lengthAdjust="spacingAndGlyphs">In addition to the clinical information stipulated in the basic requirements, there are special requirements specific to the services authorized.</text>
<text x="261.2" y="434.4" font-size="6.5" fill="#333" font-family="Liberation Sans" textLength="326.4" lengthAdjust="spacingAndGlyphs">Attached are the requirements and the timeline for returning the documentation specific to the services approved.</text>
<text x="472.7" y="191.2" font-size="16.3" fill="#16897f" font-family="Liberation Serif" textLength="132.9" lengthAdjust="spacingAndGlyphs">Required Content</text>
<text x="611.5" y="191.2" font-size="15" fill="#16897f" font-family="Liberation Serif" font-style="italic" textLength="11.1" lengthAdjust="spacingAndGlyphs">of</text>
<text x="484.2" y="211.5" font-size="18" fill="#16897f" font-family="Liberation Serif" textLength="182.2" lengthAdjust="spacingAndGlyphs">Medical Documentation</text>
<ellipse cx="274.4" cy="191.5" rx="16.2" ry="9.4" transform="rotate(-40 274.4 191.5)" fill="#0f8278"/>
<text x="0" y="0" transform="translate(266.8 199.8) skewX(-5)" font-size="19.5" font-weight="bold" fill="#fff" stroke="#fff" stroke-width="0.9" font-family="Liberation Sans" textLength="12.8" lengthAdjust="spacingAndGlyphs">H</text>
<text x="280.6" y="188.3" font-size="8.2" fill="#fff" font-family="Liberation Sans" font-style="italic" textLength="5.2" lengthAdjust="spacingAndGlyphs" stroke="#fff" stroke-width="0.3">n</text>
<text x="293.8" y="199.5" font-size="17.8" fill="#6a4f44" font-family="Liberation Sans" textLength="84.5" lengthAdjust="spacingAndGlyphs" stroke="#6a4f44" stroke-width="0.45">Health Net</text>
<text x="379.4" y="191.6" font-size="6" fill="#5a4038" font-family="Liberation Sans" textLength="4.2" lengthAdjust="spacingAndGlyphs" stroke="#5a4038" stroke-width="0.2">®</text>
<text x="293.8" y="211.5" font-size="6.2" fill="#5e4a40" stroke="#6e5a50" stroke-width="0.05" font-family="Liberation Sans" textLength="79.7" lengthAdjust="spacing">FEDERAL SERVICES</text>
<text x="446.3" y="689.1" font-size="9.6" fill="#333" font-family="Liberation Serif" font-style="italic" textLength="35.2" lengthAdjust="spacingAndGlyphs">Page 1 of 2</text>
<text x="303.7" y="700.6" font-size="5.6" fill="#222" font-family="Liberation Sans" textLength="320.7" lengthAdjust="spacingAndGlyphs">This document is the <tspan font-weight="bold">PROPRIETARY</tspan> and <tspan font-weight="bold">CONFIDENTIAL</tspan> information of Health Net Federal Services, LLC. It may not be used,</text>
<text x="320.2" y="707.2" font-size="5.6" fill="#222" font-family="Liberation Sans" textLength="286.8" lengthAdjust="spacingAndGlyphs">disclosed or reproduced, in whole or in part, without the express written permission of Health Net Federal Services.</text>
<text x="631.5" y="712.6" font-size="4" fill="#666" font-family="Liberation Sans" textLength="35.4" lengthAdjust="spacingAndGlyphs">VF091-6-045 (09/14)</text></svg>
<div id="right" class="a"></div>
<div id="tabc" class="a" style="left:704px;top:174px;width:260px;height:362px;border:1px solid #9a9a9a;background:#fff"></div>
<div class="a tab" style="left:709px;top:152px;width:88px;height:23px"><b style="left:12px;top:4px;letter-spacing:0.45px">Document</b></div>
<div class="a tab" style="left:798px;top:152px;width:61px;height:22px;border-bottom:1px solid #9a9a9a"><b style="left:12px;top:4px;letter-spacing:0.4px">Entity</b></div>
<div class="lab" style="left:718px;top:193px">Document Type:</div>
<div class="a" style="left:818px;top:188px;width:150px;height:21px;border:1px solid #a8a8a8;background:#fff"></div>
<div class="a" style="left:716px;top:226px;width:250px;height:1px;background:#000"></div>
<div class="lab" style="left:730px;top:246px">Type of Record:</div>
<div class="lab" style="left:730px;top:269px;letter-spacing:-0.1px">Date Medical Documentation Received:</div>
<div class="lab" style="left:730px;top:291px;letter-spacing:-0.27px">Veteran SSN:</div>
<div class="lab" style="left:730px;top:314px;letter-spacing:-0.12px">CallerID:</div>
<div class="a rin" style="top:241px"></div>
<div class="a rin" style="top:264px"></div>
<div class="a rin" style="top:287px"></div>
<div class="a rin" style="top:310px"></div>
<div class="lab" style="left:728px;top:360px;color:#9a9a9a;letter-spacing:-0.15px">Folder:</div>
<div class="a" style="left:728px;top:374px;width:240px;height:21px;border:1px solid #8a8a8a;background:#fff"><span class="lab" style="left:1px;top:3px;color:#9a9a9a;font-size:12.5px;letter-spacing:-0.55px">V02 Syracuse HCS-528A7</span><div class="a" style="left:213px;top:0;width:20px;height:19px;background:#e8e8e8"></div><svg class="a" style="left:213px;top:0" width="20" height="19"><path d="M4.5,7.5 L8.5,11.5 L12.5,7.5" fill="none" stroke="#b0b0b0" stroke-width="1.2"/></svg></div>
<div class="a btn2" style="left:730px;top:421px;width:150px;height:33px;border-color:#c4c4c4"><span class="lab" style="left:46px;top:9px;color:#7f8a96;letter-spacing:-0.1px">Relationships...</span></div>
<div class="a btn2" style="left:730px;top:475px;width:150px;height:33px;border-color:#6a6a6a"><span class="lab" style="left:62px;top:9px;color:#111">Journal...</span></div>
<svg class="a" style="left:0;top:0" width="954" height="824" viewBox="0 0 954 824">
<defs><linearGradient id="porg" x1="0" y1="0" x2="1" y2="0"><stop offset="0" stop-color="#e58e1a"/><stop offset="1" stop-color="#f9bb22"/></linearGradient>
<linearGradient id="pg" x1="0" y1="0" x2="1" y2="1"><stop offset="0" stop-color="#f4f4f4"/><stop offset="1" stop-color="#d8d8d8"/></linearGradient></defs>
<circle cx="768.2" cy="435.2" r="2.9" fill="url(#porg)"/><ellipse cx="768.6" cy="441.4" rx="3.8" ry="3.4" fill="url(#porg)"/>
<circle cx="761.5" cy="433.3" r="3.5" fill="#4b8ccc"/><ellipse cx="761.4" cy="441" rx="5" ry="4" fill="#4b8ccc"/>
<rect x="774" y="483" width="9.8" height="16" fill="url(#pg)" stroke="#c4c4c4" stroke-width="0.6"/>
<rect x="771" y="483" width="3" height="16" fill="#3a7cc4"/>
<g fill="#555"><rect x="769.8" y="486" width="3" height="0.9"/><rect x="769.8" y="489" width="3" height="0.9"/><rect x="769.8" y="492" width="3" height="0.9"/><rect x="769.8" y="495" width="3" height="0.9"/></g>
<g fill="#3f86d0"><rect x="776" y="486" width="5" height="1"/><rect x="776" y="488" width="6" height="1"/><rect x="776" y="490" width="5" height="1"/><rect x="776" y="492" width="6" height="1"/></g>
<rect x="784" y="484" width="1.2" height="4" fill="#6cb83a"/><rect x="784" y="489" width="1.2" height="4" fill="#b02a2a"/><rect x="784" y="494" width="1.2" height="4" fill="#e6a030"/>
<g fill="#f8e4d0"><rect x="952.5" y="268" width="1.5" height="12"/><rect x="952.5" y="291" width="1.5" height="12"/><rect x="952.5" y="314" width="1.5" height="12"/></g>
</svg>
<div class="lab" style="left:706px;top:544px">Task:</div>
<div class="lab" style="left:706px;top:566px;letter-spacing:-0.17px">Status:</div>
<div class="a btn2" style="left:706px;top:616px;width:45px;height:25px;border-color:#7a7a7a"><span class="lab" style="left:9px;top:5px;color:#111;letter-spacing:-0.5px">Save</span></div>

<div id="scroll" class="a"><div class="a btn"></div><div class="a thm"></div><svg class="a" style="left:0;top:0" width="40" height="17"><path d="M24.8,3.4 L18.6,8.6 L24.8,13.8" fill="none" stroke="#555" stroke-width="2.6"/></svg></div>
</body></html>
